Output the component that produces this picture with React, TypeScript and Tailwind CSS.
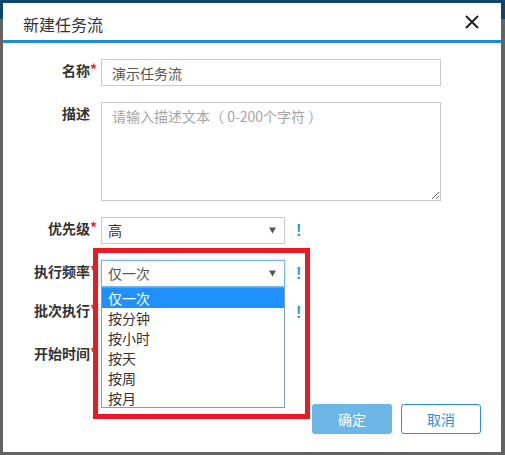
import React from 'react'

const font = { fontFamily: '"Noto Sans CJK SC", "Noto Sans", sans-serif' }

const frequencyOptions = ['仅一次', '按分钟', '按小时', '按天', '按周', '按月']

function FieldLabel({ text, required }: { text: string; required?: boolean }) {
  return (
    <div className="w-[87px] shrink-0 pt-[1px] text-right text-[14px] leading-5 font-bold text-[#333]">
      <span className="relative">
        {text}
        {required && <span className="absolute left-full top-[-1px] text-[#e4262b]">*</span>}
      </span>
    </div>
  )
}

function Hint() {
  return (
    <span className="ml-[11px] text-[16px] font-bold leading-[27px] text-[#2a9be0]" style={{ fontFamily: '"Liberation Sans", sans-serif' }}>
      !
    </span>
  )
}

function SelectBox({ value, focused }: { value: string; focused?: boolean }) {
  return (
    <div
      className={`flex h-[27px] w-[184px] items-center justify-between border bg-white pl-[6px] pr-[8px] text-[14px] ${
        focused ? 'border-[#7fb2e4] text-[#555] shadow-[0_0_3px_#b9d7f3]' : 'border-[#c9c9c9] text-[#333]'
      }`}
    >
      <span>{value}</span>
      <svg width="7" height="7" viewBox="0 0 7 7">
        <path d="M0 0.5H7L3.5 6.5Z" fill="#555" />
      </svg>
    </div>
  )
}

export default function App() {
  return (
    <div className="relative h-[455px] w-[505px] overflow-hidden bg-[#636363]" style={font}>
      {/* page header behind the overlay */}
      <div className="absolute inset-x-0 top-0 h-[19px] bg-[#0f4568]" />

      <div className="relative ml-[3px] mt-[3px] h-[449px] w-[498px] bg-white">
        {/* Header */}
        <div className="flex h-[40px] items-start justify-between border-b-[3px] border-[#1e8dd6] pl-[20px] pr-[22px] pt-[11px]">
          <span className="text-[16px] leading-5 text-[#333]">新建任务流</span>
          <svg width="14" height="14" viewBox="0 0 14 14" className="mt-[1px]">
            <path d="M1 1L13 13M13 1L1 13" stroke="#222" strokeWidth="2" />
          </svg>
        </div>

        {/* Form */}
        <div className="pt-[16px]">
          <div className="flex items-start">
            <FieldLabel text="名称" required />
            <input
              readOnly
              value="演示任务流"
              className="ml-[11px] h-[27px] w-[340px] border border-[#c9c9c9] pl-[10px] text-[14px] text-[#555] outline-none"
            />
          </div>

          <div className="mt-[16px] flex items-start">
            <FieldLabel text="描述" />
            <textarea
              placeholder="请输入描述文本（ 0-200个字符 ）"
              className="ml-[11px] h-[99px] w-[340px] border border-[#c9c9c9] px-[10px] py-[3px] text-[14px] text-[#555] outline-none placeholder:text-[#a5a5a5]"
            />
          </div>

          <div className="mt-[16px] flex items-start">
            <FieldLabel text="优先级" required />
            <div className="ml-[11px]">
              <SelectBox value="高" />
            </div>
            <Hint />
          </div>

          <div className="relative z-10 mt-[16px] flex items-start">
            <FieldLabel text="执行频率" required />
            <div className="relative ml-[11px]">
              <SelectBox value="仅一次" focused />
              <ul className="absolute left-0 top-full h-[121px] w-[184px] border border-[#7f9db9] bg-white text-[14px] text-[#333]">
                {frequencyOptions.map((opt, i) => (
                  <li
                    key={opt}
                    className={`h-[20px] pl-[6px] leading-[20px] ${i === 0 ? 'bg-[#1e90ff] text-white' : ''}`}
                  >
                    {opt}
                  </li>
                ))}
              </ul>
            </div>
            <Hint />
          </div>

          <div className="mt-[12px] flex h-[27px] items-start">
            <FieldLabel text="批次执行" required />
            <div className="ml-[11px] w-[184px]" />
            <Hint />
          </div>

          <div className="mt-[16px] flex h-[27px] items-start">
            <FieldLabel text="开始时间" required />
          </div>

          {/* Footer buttons */}
          <div className="mt-[35px] flex justify-end gap-[9px] pr-[20px]">
            <button className="h-[30px] w-[80px] rounded-[3px] bg-[#6cb7e7] text-[14px] text-white">确定</button>
            <button className="h-[30px] w-[80px] rounded-[3px] border border-[#2b8fd6] bg-white text-[14px] text-[#2b8fd6]">
              取消
            </button>
          </div>
        </div>

        {/* Annotation highlight */}
        <div className="pointer-events-none absolute left-[90px] top-[245px] z-20 h-[171px] w-[217px] border-[5px] border-[#e81b23]" />
      </div>
    </div>
  )
}
